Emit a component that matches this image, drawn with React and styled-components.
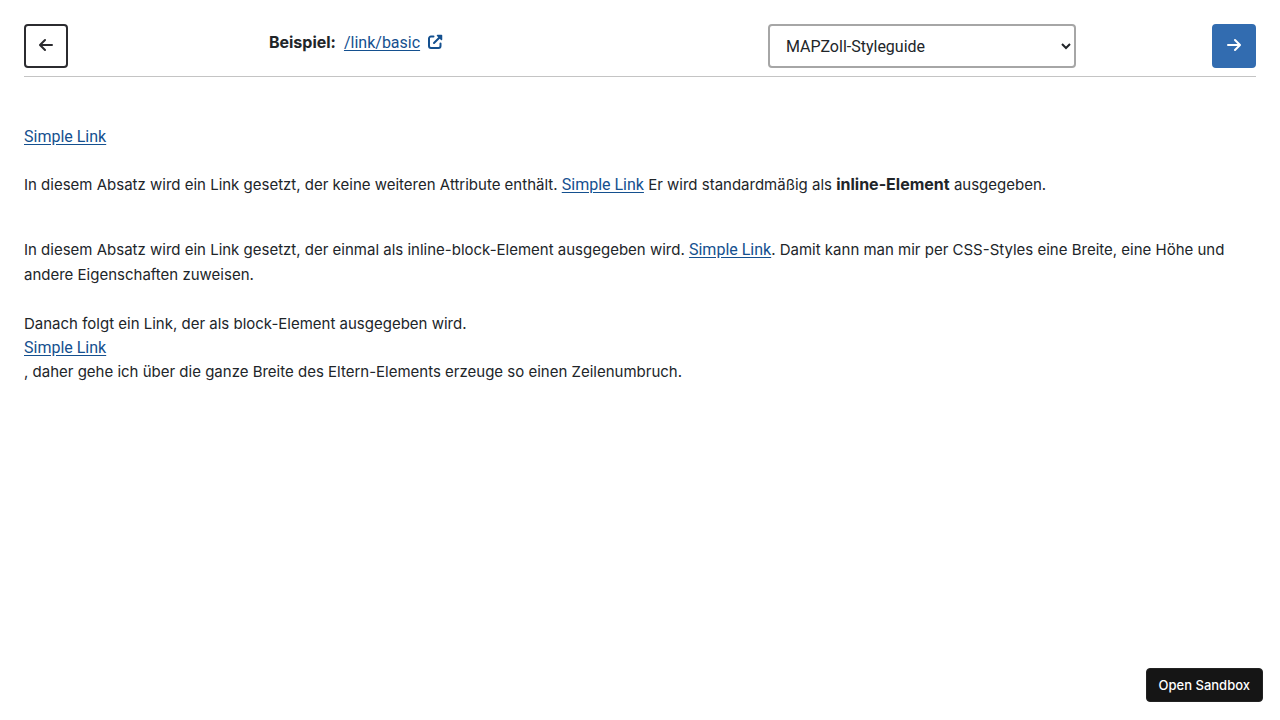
import React from "react";
import styled, { createGlobalStyle } from "styled-components";

const GlobalStyle = createGlobalStyle`
  *, *::before, *::after { box-sizing: border-box; }
  body {
    margin: 0;
    background: #fff;
    color: #212529;
    font-family: Inter, "Liberation Sans", sans-serif;
    font-size: 15px;
    line-height: 25px;
  }
`;

const Page = styled.div`
  padding: 24px;
`;

const Header = styled.header`
  display: grid;
  grid-template-columns: 44px 576fr 568fr 44px;
  padding-bottom: 8px;
  border-bottom: 1px solid #c4c4c4;
`;

const NavButton = styled.button`
  display: flex;
  align-items: center;
  justify-content: center;
  width: 44px;
  height: 44px;
  padding: 0 0 2px;
  border: 2px solid ${({ $filled }) => ($filled ? "#326cb0" : "#2b2b2f")};
  border-radius: 4px;
  background: ${({ $filled }) => ($filled ? "#326cb0" : "#fff")};
  color: ${({ $filled }) => ($filled ? "#fff" : "#2b2b2f")};
  cursor: pointer;
`;

const Example = styled.div`
  display: flex;
  justify-content: center;
  gap: 8px;
  padding-top: 6px;
`;

const Strong = styled.strong`
  font-size: 16px;
`;

const Link = styled.a`
  color: #14508f;
  font-family: Roboto, "Liberation Sans", sans-serif;
  font-size: 16px;
  text-decoration: underline;
  text-underline-offset: 2px;
`;

const InlineBlockLink = styled(Link)`
  display: inline-block;
  line-height: 20px;
`;

const BlockLink = styled(Link)`
  display: block;
  width: fit-content;
  line-height: 23px;
`;

const ExampleLink = styled(Link)`
  display: flex;
  gap: 8px;
  svg { margin-top: 4px; }
`;

const Chooser = styled.div`
  display: flex;
  justify-content: center;
  padding-right: 12px;
`;

const Select = styled.select`
  width: 308px;
  max-width: 100%;
  height: 44px;
  padding: 0 0 0 12px;
  border: 2px solid #a6a6a6;
  border-radius: 4px;
  background: #fff;
  color: #212529;
  font-family: Roboto, "Liberation Sans", sans-serif;
  font-size: 16px;
`;

const Content = styled.main`
  padding-top: 48px;
`;

const Paragraph = styled.p`
  margin: ${({ $wide }) => ($wide ? "40px" : "24px")} 0 0;
`;

const SandboxButton = styled.button`
  position: fixed;
  right: 17px;
  bottom: 18px;
  height: 34px;
  padding: 0 12px;
  border: 1px solid #222;
  border-radius: 4px;
  background: #151515;
  color: #fff;
  font-family: Inter, sans-serif;
  font-size: 13px;
  font-weight: 500;
  cursor: pointer;
`;

const Arrow = ({ back }) => (
  <svg width="14" height="14" viewBox="0 0 14 14" fill="none" stroke="currentColor" strokeWidth="2" strokeLinecap="round" strokeLinejoin="round" aria-hidden="true">
    <path d={back ? "M13 7H1.2M6 2 1 7l5 5" : "M1 7h11.8M8 2l5 5-5 5"} />
  </svg>
);

const ExternalIcon = () => (
  <svg width="15" height="15" viewBox="0 0 15 15" fill="none" stroke="currentColor" strokeWidth="2" strokeLinecap="round" strokeLinejoin="round" aria-hidden="true">
    <path d="M5.5 2.5H3a2 2 0 0 0-2 2V12a2 2 0 0 0 2 2h7.500a2 2 0 0 0 2-2V9.500M13 2 6 9" />
    <path d="M9.500 1.500H13.500V5.500Z" fill="currentColor" strokeWidth="1.500" />
  </svg>
);

export default function App() {
  return (
    <>
      <GlobalStyle />
      <Page>
        <Header>
          <NavButton type="button" aria-label="Zurück"><Arrow back /></NavButton>
          <Example>
            <Strong>Beispiel:</Strong>
            <ExampleLink href="#basic">/link/basic<ExternalIcon /></ExampleLink>
          </Example>
          <Chooser>
            <Select aria-label="Styleguide" defaultValue="mapzoll">
              <option value="mapzoll">MAPZoll-Styleguide</option>
            </Select>
          </Chooser>
          <NavButton type="button" $filled aria-label="Weiter"><Arrow /></NavButton>
        </Header>
        <Content>
          <BlockLink href="#link">Simple Link</BlockLink>
          <Paragraph>
            In diesem Absatz wird ein Link gesetzt, der keine weiteren Attribute enthält.{" "}
            <Link href="#link">Simple Link</Link> Er wird standardmäßig als{" "}
            <Strong>inline-Element</Strong> ausgegeben.
          </Paragraph>
          <Paragraph $wide>
            In diesem Absatz wird ein Link gesetzt, der einmal als inline-block-Element ausgegeben wird.{" "}
            <InlineBlockLink href="#link">Simple Link</InlineBlockLink>. Damit kann man mir per
            CSS-Styles eine Breite, eine Höhe und andere Eigenschaften zuweisen.
          </Paragraph>
          <Paragraph>
            Danach folgt ein Link, der als block-Element ausgegeben wird.{" "}
            <BlockLink href="#link">Simple Link</BlockLink>
            , daher gehe ich über die ganze Breite des Eltern-Elements erzeuge so einen Zeilenumbruch.
          </Paragraph>
        </Content>
      </Page>
      <SandboxButton type="button">Open Sandbox</SandboxButton>
    </>
  );
}
